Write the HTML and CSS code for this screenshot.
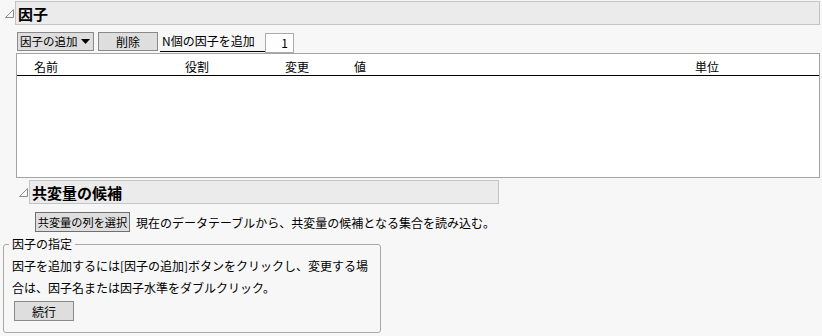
FILE: index.html
```html
<!DOCTYPE html>
<html lang="ja">
<head>
    <meta charset="UTF-8">
    <meta name="viewport" content="width=device-width, initial-scale=1.0">
    <title>因子</title>
    <link rel="stylesheet" href="styles.css">
</head>
<body>
    <div class="page">
        <!-- 因子 -->
        <div class="outline-head">
            <span class="toggle"><svg width="9" height="9" viewBox="0 0 9 9"><polygon points="8.5,0.5 8.5,8.5 0.5,8.5" /></svg></span>
            <div class="bar main">因子</div>
        </div>
        <div class="outline-body">
            <div class="toolbar">
                <button class="btn add">因子の追加 <svg width="9" height="5" viewBox="0 0 9 5"><polygon points="0,0 9,0 4.5,5" /></svg></button>
                <button class="btn del">削除</button>
                <span class="n-label">N個の因子を追加</span>
                <span class="n-input">1</span>
            </div>
            <div class="factor-table">
                <div class="thead">
                    <span>名前</span>
                    <span>役割</span>
                    <span>変更</span>
                    <span>値</span>
                    <span>単位</span>
                </div>
            </div>

            <!-- 共変量の候補 -->
            <div class="outline-head sub">
                <span class="toggle"><svg width="9" height="9" viewBox="0 0 9 9"><polygon points="8.5,0.5 8.5,8.5 0.5,8.5" /></svg></span>
                <div class="bar second">共変量の候補</div>
            </div>
            <div class="cov-row">
                <button class="btn cov">共変量の列を選択</button>
                <span>現在のデータテーブルから、共変量の候補となる集合を読み込む。</span>
            </div>
        </div>

        <fieldset class="spec">
            <legend>因子の指定</legend>
            <p>因子を追加するには[因子の追加]ボタンをクリックし、変更する場合は、因子名または因子水準をダブルクリック。</p>
            <button class="btn go">続行</button>
        </fieldset>
    </div>
</body>
</html>
```

FILE: styles.css
```css
body{
    margin: 0;
    background: #f7f7f7;
    font-family: "Noto Sans CJK JP", sans-serif;
    font-size: 12px;
    color: #000;
}
.page{
    padding: 1px 2px 0 3px;
}
/* 見出しバー */
.outline-head{
    display: flex;
    align-items: center;
}
.toggle{
    width: 12px;
    display: flex;
    align-items: center;
    padding-left: 2px;
    box-sizing: border-box;
}
.toggle svg polygon{
    fill: none;
    stroke: #8a8a8a;
    stroke-width: 1;
}
.bar{
    flex: 1;
    height: 24px;
    box-sizing: border-box;
    border: 1px solid #c4c4c4;
    background: #ebebeb;
    font-weight: bold;
    font-size: 15px;
    display: flex;
    align-items: center;
    padding-left: 2px;
}
.bar.second{
    flex: none;
    width: 470px;
}
.outline-body{
    padding-left: 14px;
}
/* ボタン行 */
.toolbar{
    display: flex;
    align-items: flex-start;
    margin-top: 7px;
    height: 21px;
}
.btn{
    font-family: inherit;
    font-size: 12px;
    color: #000;
    height: 19px;
    padding: 0;
    border: 1px solid #8a8a8a;
    background: #dedede;
    border-radius: 0;
    line-height: 17px;
    white-space: nowrap;
}
.btn.add{
    width: 77px;
    font-size: 11.5px;
    text-align: left;
    padding-left: 2px;
    display: flex;
    align-items: center;
    gap: 3px;
}
.btn.del{
    width: 60px;
    margin-left: 4px;
}
.n-label{
    margin-left: 2px;
    width: 105px;
    height: 20px;
    box-sizing: border-box;
    border-bottom: 1px solid #000;
    padding-left: 2px;
    line-height: 18px;
}
.n-input{
    width: 29px;
    height: 20px;
    margin-top: 1px;
    box-sizing: border-box;
    border: 1px solid #aaa;
    background: #fff;
    text-align: right;
    padding-right: 5px;
    line-height: 18px;
}
/* 因子テーブル */
.factor-table{
    margin-left: -1px;
    height: 125px;
    box-sizing: border-box;
    border: 1px solid #a4a4a4;
    background: #fff;
}
.thead{
    display: grid;
    grid-template-columns: 151px 100px 69px 341px 1fr;
    padding-left: 17px;
    height: 22px;
    box-sizing: border-box;
    border-bottom: 1px solid #000;
    line-height: 26px;
}
.outline-head.sub{
    margin-top: 2px;
}
/* 共変量 */
.cov-row{
    display: flex;
    align-items: center;
    gap: 6px;
    padding-left: 18px;
    margin-top: 8px;
}
.btn.cov{
    width: 95px;
    height: 20px;
    font-size: 11.2px;
    border-color: #707070;
}
/* 因子の指定 */
.spec{
    width: 378px;
    box-sizing: border-box;
    margin: 5px 0 0 0;
    padding: 0 6px 11px 8px;
    border: 1px solid #a8a8a8;
    border-radius: 3px;
}
.spec legend{
    padding: 0 3px;
    margin-left: -3px;
    line-height: 14px;
}
.spec p{
    margin: 4px 0 2px 0;
    line-height: 22px;
}
.btn.go{
    width: 60px;
    height: 20px;
    margin-left: 2px;
}
```
